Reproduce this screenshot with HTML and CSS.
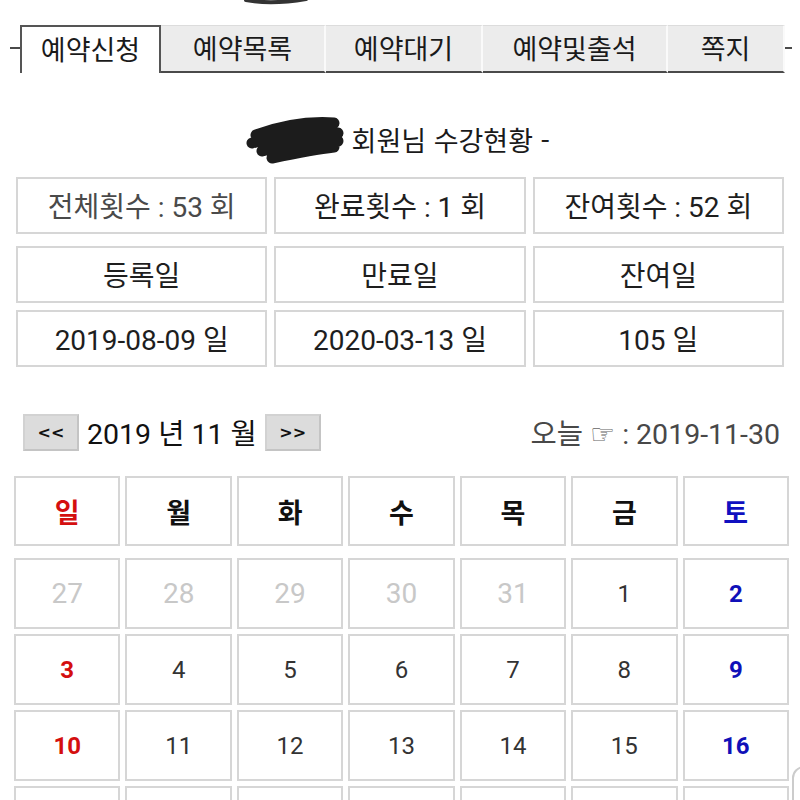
FILE: index.html
```html
<!DOCTYPE html>
<html lang="ko">
<head>
<meta charset="utf-8">
<title>예약신청</title>
<link rel="stylesheet" href="styles.css">
</head>
<body>
<svg class="top-blob" width="70" height="8" viewBox="0 0 70 8"><path d="M4 2 C20 5 40 5 64 1" stroke="#333" stroke-width="4" fill="none" stroke-linecap="round"/></svg>
<div class="tabs">
  <div class="tab-edge"></div>
  <div class="tab active t1">예약신청</div>
  <div class="tab t2">예약목록</div>
  <div class="tab t3">예약대기</div>
  <div class="tab t4">예약및출석</div>
  <div class="tab t5">쪽지</div>
  <div class="tab-rest"></div>
</div>

<div class="title">
  <svg class="scribble" width="98" height="50" viewBox="0 0 98 50"><path d="M10 20 C32 12 60 6 88 8 M6 28 C34 20 64 16 92 18 M16 36 C44 28 70 26 92 26 M26 43 C50 38 70 34 88 32" stroke="#1c1c1c" stroke-width="11" fill="none" stroke-linecap="round"/></svg><span> 회원님 수강현황 -</span>
</div>

<div class="info">
  <div class="info-row first">
    <div class="cell gray">전체횟수 : 53 회</div>
    <div class="cell">완료횟수 : 1 회</div>
    <div class="cell">잔여횟수 : 52 회</div>
  </div>
  <div class="info-row">
    <div class="cell">등록일</div>
    <div class="cell">만료일</div>
    <div class="cell">잔여일</div>
  </div>
  <div class="info-row">
    <div class="cell">2019-08-09 일</div>
    <div class="cell">2020-03-13 일</div>
    <div class="cell">105 일</div>
  </div>
</div>

<div class="nav">
  <div class="nav-left">
    <button class="nav-btn">&lt;&lt;</button>
    <span class="month">2019 년 11 월</span>
    <button class="nav-btn">&gt;&gt;</button>
  </div>
  <div class="today">오늘 <span class="hand">☞</span> : 2019-11-30</div>
</div>

<div class="cal-head">
  <div class="hcell sun">일</div>
  <div class="hcell">월</div>
  <div class="hcell">화</div>
  <div class="hcell">수</div>
  <div class="hcell">목</div>
  <div class="hcell">금</div>
  <div class="hcell sat">토</div>
</div>

<div class="cal">
  <div class="day prev">27</div>
  <div class="day prev">28</div>
  <div class="day prev">29</div>
  <div class="day prev">30</div>
  <div class="day prev">31</div>
  <div class="day">1</div>
  <div class="day sat">2</div>

  <div class="day sun">3</div>
  <div class="day">4</div>
  <div class="day">5</div>
  <div class="day">6</div>
  <div class="day">7</div>
  <div class="day">8</div>
  <div class="day sat">9</div>

  <div class="day sun">10</div>
  <div class="day">11</div>
  <div class="day">12</div>
  <div class="day">13</div>
  <div class="day">14</div>
  <div class="day">15</div>
  <div class="day sat">16</div>

  <div class="day"></div>
  <div class="day"></div>
  <div class="day"></div>
  <div class="day"></div>
  <div class="day"></div>
  <div class="day"></div>
  <div class="day"></div>
</div>

<div class="float-btn"></div>
</body>
</html>
```

FILE: styles.css
```css
html, body {
  margin: 0;
  padding: 0;
  background: #fff;
  overflow: hidden;
  height: 800px;
}
body {
  font-family: Roboto, "Noto Sans CJK KR", sans-serif;
  color: #222;
  position: relative;
}
.top-blob {
  position: absolute;
  left: 242px;
  top: -2px;
}
.tabs {
  display: flex;
  padding-top: 25px;
  margin-left: 10px;
  width: 782px;
  height: 49px;
  box-sizing: border-box;
}
.tab-edge {
  width: 10px;
  border-bottom: 2px solid #4a4a4a;
}
.tab-rest {
  flex: 1;
  border-bottom: 2px solid #4a4a4a;
}
.tab {
  box-sizing: border-box;
  height: 48px;
  display: flex;
  align-items: center;
  justify-content: center;
  font-family: "Noto Sans CJK KR", sans-serif;
  font-size: 27px;
  color: #1a1a1a;
  background: #ececec;
  border-top: 1px solid #dcdcdc;
  border-right: 2px solid #fafafa;
  border-bottom: 2px solid #4a4a4a;
  padding-bottom: 2px;
}
.tab.active {
  background: #fff;
  border: 2px solid #555;
  border-bottom: none;
  padding-bottom: 4px;
}
.t1 { width: 141px; }
.t2 { width: 165px; }
.t3 { width: 157px; }
.t4 { width: 185px; }
.t5 { width: 117px; }

.title {
  margin-top: 66px;
  height: 50px;
  display: flex;
  justify-content: center;
  align-items: center;
  font-size: 27px;
  color: #1a1a1a;
  font-family: "Noto Sans CJK KR", sans-serif;
}
.title span {
  white-space: pre;
  margin-top: -2px;
}
.scribble {
  margin-left: -4px;
}

.info {
  margin: 12px 16px 0 16px;
}
.info-row {
  display: grid;
  grid-template-columns: repeat(3, 1fr);
  column-gap: 7px;
  margin-bottom: 7px;
}
.info-row.first {
  margin-bottom: 12px;
}
.cell {
  height: 57px;
  box-sizing: border-box;
  border: 2px solid #d6d6d6;
  display: flex;
  align-items: center;
  justify-content: center;
  font-size: 28px;
  color: #1e1e1e;
  padding-bottom: 2px;
}
.cell.gray {
  color: #4a4a4a;
}

.nav {
  display: flex;
  justify-content: space-between;
  align-items: center;
  margin: 47px 20px 0 23px;
  height: 37px;
}
.nav-left {
  display: flex;
  align-items: center;
  gap: 8px;
}
.nav-btn {
  width: 56px;
  height: 37px;
  background: #dcdcdc;
  border: 2px solid #c4c4c4;
  border-top-color: #d2d2d2;
  border-left-color: #d2d2d2;
  font-family: "DejaVu Sans", sans-serif;
  font-weight: bold;
  font-size: 16px;
  color: #111;
  padding: 0;
}
.month {
  font-size: 28.5px;
  color: #111;
  margin-top: -2px;
}
.today {
  font-size: 28.5px;
  color: #484848;
  margin-top: -2px;
}
.hand {
  font-family: "DejaVu Sans", sans-serif;
  font-size: 28px;
  color: #666;
}

.cal-head, .cal {
  display: grid;
  grid-template-columns: repeat(7, 1fr);
  column-gap: 5px;
  margin: 0 11px 0 14px;
}
.cal-head {
  margin-top: 25px;
}
.hcell {
  height: 70px;
  box-sizing: border-box;
  border: 2px solid #d6d6d6;
  display: flex;
  align-items: center;
  justify-content: center;
  font-size: 27px;
  font-weight: bold;
  font-family: "Noto Sans CJK KR", sans-serif;
  color: #111;
}
.hcell.sun { color: #d40f0f; }
.hcell.sat { color: #1010c0; }
.cal {
  margin-top: 12px;
  row-gap: 5px;
}
.day {
  height: 71px;
  box-sizing: border-box;
  border: 2px solid #d6d6d6;
  display: flex;
  align-items: center;
  justify-content: center;
  font-size: 24px;
  color: #333;
}
.day.prev { color: #c8c8c8; font-size: 28px; }
.day.sun { color: #d40f0f; font-weight: bold; }
.day.sat { color: #1010b8; font-weight: bold; }

.float-btn {
  position: absolute;
  left: 792px;
  top: 766px;
  width: 60px;
  height: 60px;
  border: 2px solid #ccc;
  border-radius: 12px;
  background: #fff;
}
```
